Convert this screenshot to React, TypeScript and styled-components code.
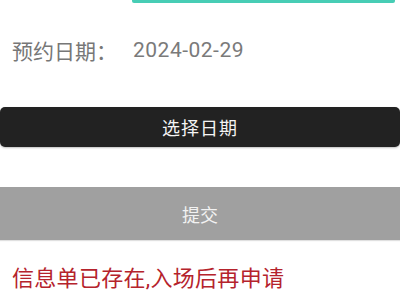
import React from "react";
import styled, { createGlobalStyle } from "styled-components";

const Global = createGlobalStyle`
  html, body { margin: 0; padding: 0; background: #ffffff; }
  body { font-family: Roboto, "Noto Sans CJK SC", sans-serif; }
`;

const Page = styled.div`
  width: 400px;
  height: 300px;
  overflow: hidden;
  display: flex;
  flex-direction: column;
`;

const InputLine = styled.div`
  margin-left: 132px;
  width: 263px;
  height: 3px;
  background: #47cdb5;
  border-radius: 0 0 2px 2px;
`;

const Row = styled.div`
  display: flex;
  align-items: center;
  height: 28px;
  margin-top: 33px;
  padding-left: 12px;
  font-size: 21px;
  color: #777777;
`;

const Label = styled.span`
  width: 121px;
`;

const Value = styled.span`
  color: #7a7a7a;
  letter-spacing: 0.5px;
`;

const Button = styled.button<{ $variant: "dark" | "gray" }>`
  display: flex;
  align-items: center;
  justify-content: center;
  width: 400px;
  border: none;
  padding: 0;
  font-family: Roboto, "Noto Sans CJK SC", sans-serif;
  font-size: 18px;
  letter-spacing: ${(p) => (p.$variant === "dark" ? "1px" : "0")};
  color: ${(p) => (p.$variant === "dark" ? "#f4f4f4" : "#f2f2f2")};
  background: ${(p) => (p.$variant === "dark" ? "#222222" : "#a0a0a0")};
  border-radius: ${(p) => (p.$variant === "dark" ? "5px" : "0")};
  height: ${(p) => (p.$variant === "dark" ? "40px" : "53px")};
  margin-top: ${(p) => (p.$variant === "dark" ? "43px" : "40px")};
  box-shadow: ${(p) =>
    p.$variant === "dark" ? "0 1px 2px rgba(0,0,0,0.25)" : "0 1px 1px rgba(0,0,0,0.12)"};
`;

const Notice = styled.div`
  margin-top: 24px;
  padding-left: 12px;
  font-size: 22px;
  letter-spacing: 0.3px;
  line-height: 30px;
  color: #b5232c;
`;

export default function App() {
  return (
    <Page>
      <Global />
      <InputLine />
      <Row>
        <Label>预约日期：</Label>
        <Value>2024-02-29</Value>
      </Row>
      <Button $variant="dark">选择日期</Button>
      <Button $variant="gray">提交</Button>
      <Notice>信息单已存在,入场后再申请</Notice>
    </Page>
  );
}
